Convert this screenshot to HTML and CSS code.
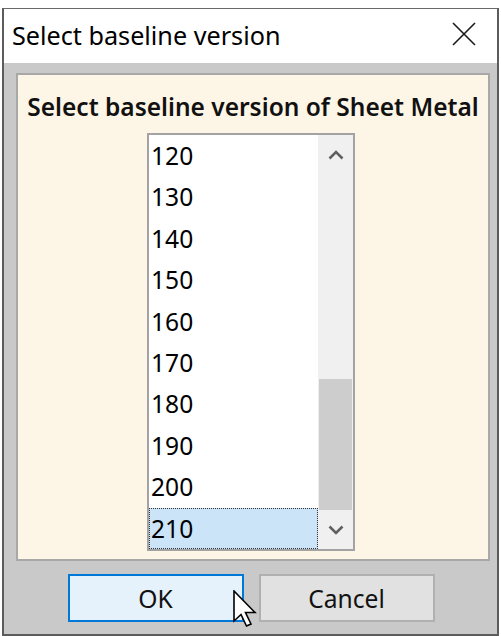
FILE: index.html
```html
<!DOCTYPE html>
<html>
<head>
<meta charset="utf-8">
<link rel="stylesheet" href="styles.css">
</head>
<body>
<div class="window">
  <div class="titlebar">
    <span class="title">Select baseline version</span>
    <svg class="close" width="24" height="24" viewBox="0 0 24 24"><path d="M1 1 L23 23 M23 1 L1 23" stroke="#1a1a1a" stroke-width="1.6" fill="none"/></svg>
  </div>
  <div class="client">
    <div class="panel">
      <div class="prompt">Select baseline version of Sheet Metal</div>
      <div class="listbox">
        <ul class="items">
          <li>120</li>
          <li>130</li>
          <li>140</li>
          <li>150</li>
          <li>160</li>
          <li>170</li>
          <li>180</li>
          <li>190</li>
          <li>200</li>
          <li class="selected">210</li>
        </ul>
        <div class="scrollbar">
          <div class="arrow"><svg width="16" height="10" viewBox="0 0 16 10"><path d="M1.5 8.5 L8 2 L14.5 8.5" stroke="#606060" stroke-width="2.6" fill="none"/></svg></div>
          <div class="track"><div class="thumb"></div></div>
          <div class="arrow"><svg width="16" height="10" viewBox="0 0 16 10"><path d="M1.5 1.5 L8 8 L14.5 1.5" stroke="#606060" stroke-width="2.6" fill="none"/></svg></div>
        </div>
      </div>
    </div>
    <div class="buttons">
      <div class="btn default">OK</div>
      <div class="btn">Cancel</div>
    </div>
  </div>
  <svg class="cursor" width="26" height="42" viewBox="0 0 26 42"><path d="M1 1 L1 31 L8 24.5 L13.5 36 L18 34 L12.5 22.5 L22 22.5 Z" fill="#fff" stroke="#000" stroke-width="1.6" stroke-linejoin="miter"/></svg>
</div>
</body>
</html>
```
FILE: styles.css
```css
* { box-sizing: border-box; }
html, body { margin: 0; padding: 0; background: #ffffff; }
body {
  font-family: "Noto Sans", "Open Sans", sans-serif;
  color: #000;
  width: 501px;
  height: 636px;
  overflow: hidden;
}
.window {
  position: relative;
  margin: 8px 0 0 2px;
  width: 497px;
  height: 628px;
  border: 2px solid #5c5c5c;
  border-top: 1px solid #6a6a6a;
  display: flex;
  flex-direction: column;
}
.titlebar {
  height: 54px;
  background: #ffffff;
  display: flex;
  align-items: center;
  justify-content: space-between;
  padding: 0 21px 0 8px;
}
.title {
  font-size: 25.2px;
  line-height: 30px;
  margin-top: -2px;
}
.close { display: block; margin-top: -4px; }
.client {
  flex: 1;
  background: #c9c9c9;
  padding: 10px 7px 0 12px;
  display: flex;
  flex-direction: column;
}
.panel {
  width: 474px;
  height: 488px;
  background: #fdf5e6;
  border: 2px solid #a8a8a8;
  display: flex;
  flex-direction: column;
}
.prompt {
  font-size: 24.5px;
  font-weight: 600;
  line-height: 32px;
  margin-top: 16px;
  text-align: center;
  color: #111;
}
.listbox {
  margin: 10px 0 0 129px;
  width: 208px;
  height: 418px;
  border: 2px solid #a3a3a3;
  background: #ffffff;
  display: flex;
}
.items {
  list-style: none;
  margin: 0;
  padding: 0;
  flex: 1;
}
.items li {
  height: 41.4px;
  line-height: 41.4px;
  font-size: 24.6px;
  padding-left: 2px;
}
.items li.selected {
  background: #cce4f7;
  outline: 1px dotted #333;
  outline-offset: -1px;
}
.scrollbar {
  width: 35px;
  background: #f0f0f0;
  display: flex;
  flex-direction: column;
}
.arrow {
  height: 39px;
  display: flex;
  align-items: center;
  justify-content: center;
}
.arrow svg { display: block; }
.track {
  flex: 1;
  display: flex;
  flex-direction: column;
  justify-content: flex-end;
}
.thumb {
  height: 131px;
  margin: 0 1px;
  background: #cdcdcd;
}
.buttons {
  display: flex;
  justify-content: center;
  gap: 15px;
  margin-top: 13px;
  padding-right: 4px;
}
.btn {
  width: 176px;
  height: 48px;
  border: 2px solid #b0b0b0;
  background: #e1e1e1;
  font-size: 24.6px;
  display: flex;
  align-items: center;
  justify-content: center;
  color: #111;
}
.btn.default {
  border-color: #0078d7;
  background: #e5f1fb;
}
.cursor {
  position: absolute;
  left: 229px;
  top: 581px;
}
```
